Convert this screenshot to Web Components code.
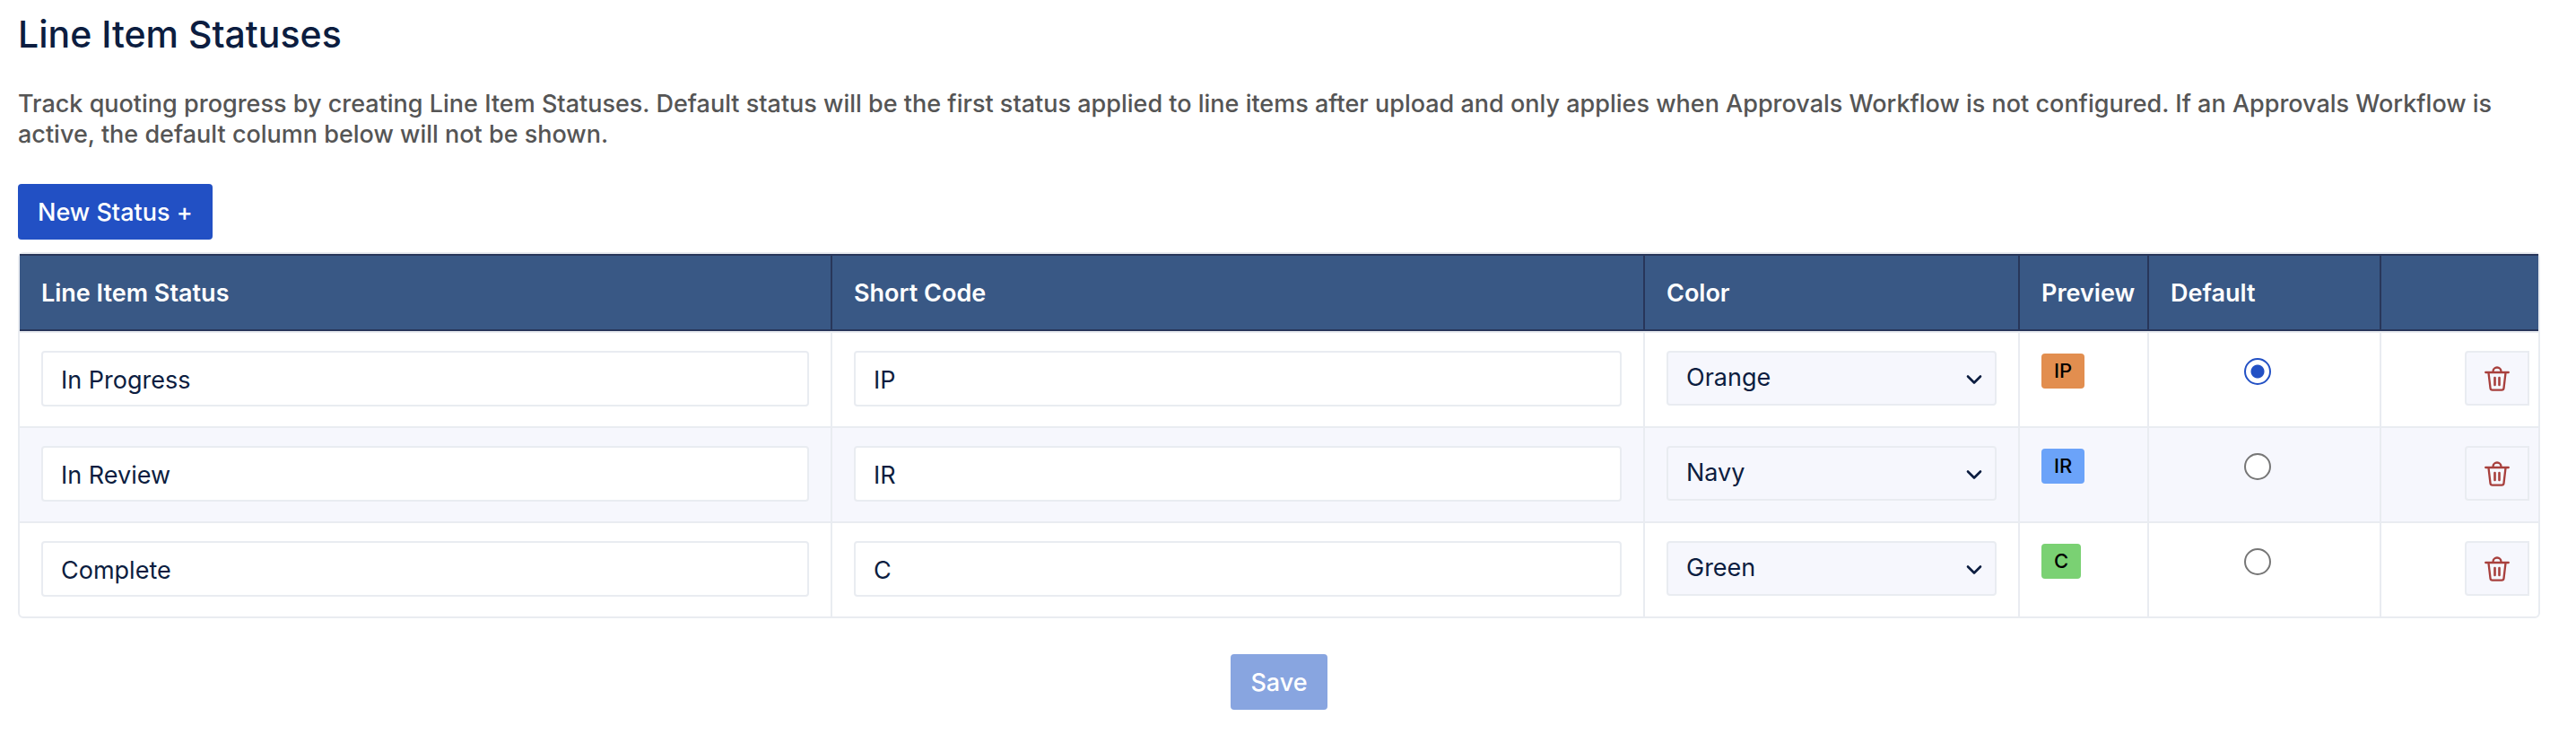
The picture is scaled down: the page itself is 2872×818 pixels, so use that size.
<!DOCTYPE html>
<html lang="en">
<head>
<meta charset="utf-8">
<title>Line Item Statuses</title>
<style>
  body {
    margin: 0;
    background: #fff;
    color: #0c1d40;
    font: 400 27px/34px Inter, sans-serif;
    --line: #e9ecf1;
    --tint: #f6f7fd;
    --primary: #2250c4;
  }
</style>
</head>
<body>
<status-settings></status-settings>

<template id="settings-template">
  <style>
    :host { display: block; padding: 12px 40px 28px 20px; }
    h1 { margin: 0; font-size: 41px; line-height: 52px; font-weight: 500; }
    p { margin: 35px 0 38px; color: #555; font-weight: 500; }
    .frame { margin-top: 14px; border: 2px solid var(--line); border-radius: 6px; }
    table { width: 100%; table-layout: fixed; border-collapse: separate; border-spacing: 0; }
    .color { width: 418px; }
    .preview { width: 144px; }
    .default { width: 259px; }
    .actions { width: 175px; }
    th {
      box-sizing: border-box;
      height: 86px;
      padding: 2px 12px 0 24px;
      border: solid #28365a;
      border-width: 2px 2px 2px 0;
      background: #395885;
      color: #fff;
      font-weight: 600;
      text-align: left;
    }
    td {
      padding: 20px 24px 22px;
      border: solid var(--line);
      border-width: 0 2px 2px 0;
      vertical-align: top;
    }
    th:last-child, td:last-child { border-right: 0; }
    tbody tr:first-child td { border-top-width: 2px; }
    tbody tr:last-child td { border-bottom: 0; }
    tbody tr:nth-child(even) { background: var(--tint); }
    td.pick { padding-right: 40px; text-align: center; }
    td.remove { padding-right: 10px; }
    input[type=radio] {
      appearance: none;
      box-sizing: border-box;
      display: block;
      width: 30px;
      height: 30px;
      margin: 8px auto 0;
      border: 2px solid #767676;
      border-radius: 50%;
      background: #fff;
    }
    input[type=radio]:checked {
      border-color: var(--primary);
      background: radial-gradient(circle, var(--primary) 7px, #fff 8px);
    }
    footer { display: flex; justify-content: center; margin-top: 40px; }
  </style>
  <h1>Line Item Statuses</h1>
  <p>Track quoting progress by creating Line Item Statuses. Default status will be the first status applied to line items after upload and only applies when Approvals Workflow is not configured. If an Approvals Workflow is active, the default column below will not be shown.</p>
  <action-button>New Status +</action-button>
  <div class="frame">
    <table>
      <colgroup><col><col><col class="color"><col class="preview"><col class="default"><col class="actions"></colgroup>
      <thead>
        <tr><th scope="col">Line Item Status</th><th scope="col">Short Code</th><th scope="col">Color</th><th scope="col">Preview</th><th scope="col">Default</th><th></th></tr>
      </thead>
      <tbody></tbody>
    </table>
  </div>
  <footer><action-button disabled>Save</action-button></footer>
</template>

<template id="button-template">
  <style>
    :host { display: flex; }
    button {
      height: 62px;
      padding: 2px 22px 0;
      border: 0;
      border-radius: 4px;
      background: var(--primary);
      color: #fff;
      font: inherit;
      font-weight: 500;
    }
    button:disabled { background: #88a5e0; }
  </style>
  <button type="button"><slot></slot></button>
</template>

<template id="field-template">
  <style>
    :host { display: block; }
    input {
      display: block;
      box-sizing: border-box;
      width: 100%;
      height: 62px;
      padding: 2px 20px 0;
      border: 2px solid var(--line);
      border-radius: 4px;
      background: #fff;
      color: inherit;
      font: inherit;
    }
  </style>
  <input type="text">
</template>

<template id="select-template">
  <style>
    :host { display: grid; align-items: center; }
    select, svg { grid-area: 1 / 1; }
    select {
      appearance: none;
      box-sizing: border-box;
      width: 100%;
      height: 61px;
      padding: 0 60px 2px 20px;
      border: 2px solid var(--line);
      border-radius: 4px;
      background: var(--tint);
      color: inherit;
      font: inherit;
    }
    svg { justify-self: end; margin: 2px 16px 0 0; pointer-events: none; }
  </style>
  <select></select>
  <svg width="18" height="12" viewBox="0 0 18 12" fill="none" stroke="#0c1d40" stroke-width="2.600" stroke-linecap="round" stroke-linejoin="round" aria-hidden="true"><path d="M2 2.500l7 7 7-7"/></svg>
</template>

<template id="badge-template">
  <style>
    :host {
      display: block;
      width: fit-content;
      margin-top: 3px;
      padding: 0 14px;
      border-radius: 4px;
      color: #000;
      font-size: 22px;
      line-height: 39px;
      font-weight: 500;
    }
    :host([color=Orange]) { background: #e28e4f; }
    :host([color=Navy]) { background: #6ba3f9; }
    :host([color=Green]) { background: #7ad173; }
  </style>
  <slot></slot>
</template>

<template id="delete-template">
  <style>
    :host { display: flex; justify-content: flex-end; }
    button {
      display: grid;
      place-items: center;
      width: 72px;
      height: 61px;
      padding: 0;
      border: 2px solid var(--line);
      border-radius: 4px 0 0 4px;
      background: var(--tint);
      color: #a8403d;
    }
  </style>
  <button type="button">
    <svg width="28" height="28" viewBox="0 0 28 28" fill="none" stroke="currentColor" stroke-width="2.300" stroke-linecap="round" stroke-linejoin="round" aria-hidden="true">
      <path d="M1.200 7h25.600M9.500 7V6a4.500 4.500 0 0 1 9 0v1M4.500 7.500l2 17a2.400 2.400 0 0 0 2.400 2.200h10.200a2.400 2.400 0 0 0 2.400-2.200l2-17"/>
      <path stroke-width="2.600" d="M11.500 13v8M16.500 13v8"/>
    </svg>
  </button>
</template>

<script>
  class TemplateElement extends HTMLElement {
    constructor() {
      super();
      const template = document.getElementById(this.constructor.template);
      this.attachShadow({ mode: 'open' }).append(template.content.cloneNode(true));
    }
  }

  customElements.define('action-button', class extends TemplateElement {
    static template = 'button-template';
    connectedCallback() {
      this.shadowRoot.querySelector('button').disabled = this.hasAttribute('disabled');
    }
  });

  customElements.define('text-field', class extends TemplateElement {
    static template = 'field-template';
    connectedCallback() {
      const input = this.shadowRoot.querySelector('input');
      input.value = this.getAttribute('value');
      input.setAttribute('aria-label', this.getAttribute('label'));
    }
  });

  customElements.define('color-select', class extends TemplateElement {
    static template = 'select-template';
    connectedCallback() {
      const select = this.shadowRoot.querySelector('select');
      select.replaceChildren(...['Orange', 'Navy', 'Green'].map(name => new Option(name)));
      select.value = this.getAttribute('value');
      select.setAttribute('aria-label', this.getAttribute('label'));
    }
  });

  customElements.define('status-badge', class extends TemplateElement {
    static template = 'badge-template';
  });

  customElements.define('delete-button', class extends TemplateElement {
    static template = 'delete-template';
    connectedCallback() {
      this.shadowRoot.querySelector('button').setAttribute('aria-label', this.getAttribute('label'));
    }
  });

  const statuses = [
    { name: 'In Progress', code: 'IP', color: 'Orange', isDefault: true },
    { name: 'In Review', code: 'IR', color: 'Navy' },
    { name: 'Complete', code: 'C', color: 'Green' },
  ];

  customElements.define('status-settings', class extends TemplateElement {
    static template = 'settings-template';
    connectedCallback() {
      this.shadowRoot.querySelector('tbody').innerHTML = statuses.map(s => `
        <tr>
          <td><text-field label="Line Item Status" value="${s.name}"></text-field></td>
          <td><text-field label="Short Code" value="${s.code}"></text-field></td>
          <td><color-select label="Color" value="${s.color}"></color-select></td>
          <td><status-badge color="${s.color}">${s.code}</status-badge></td>
          <td class="pick"><input type="radio" name="default" aria-label="${s.name} is the default" ${s.isDefault ? 'checked' : ''}></td>
          <td class="remove"><delete-button label="Delete ${s.name}"></delete-button></td>
        </tr>`).join('');
    }
  });
</script>
</body>
</html>
